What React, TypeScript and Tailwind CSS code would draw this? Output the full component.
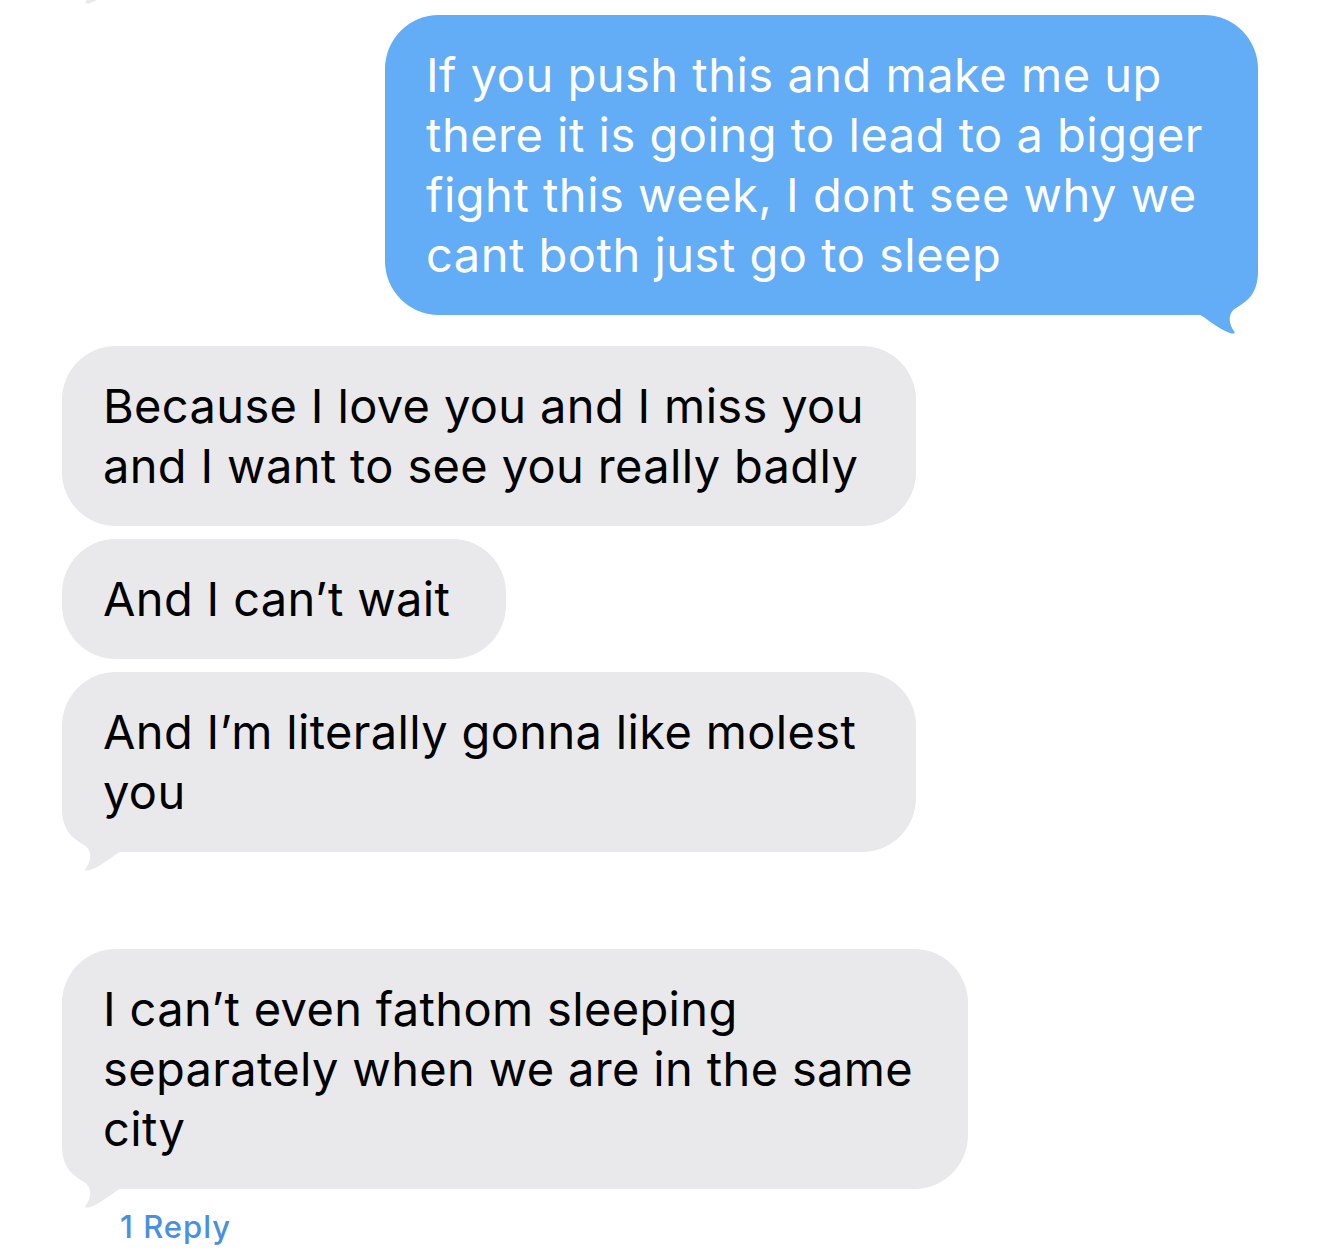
const TAIL = 'M0 0 L80 0 L80 18 C80 40 70 48 58 55 C50 60 50 70 56 78 C58 81 55 81 52 80 C40 76 30 66 19 60 L0 60 Z'

const Tail = ({ side, color }: { side: 'left' | 'right'; color: string }) => (
  <svg
    width="80"
    height="82"
    viewBox="0 0 80 82"
    className={
      side === 'right'
        ? 'absolute right-0 bottom-[-20px]'
        : 'absolute left-0 bottom-[-20px] -scale-x-100'
    }
  >
    <path d={TAIL} fill={color} />
  </svg>
)

const Bubble = ({
  children,
  width,
  tail,
}: {
  children: React.ReactNode
  width: string
  tail?: boolean
}) => (
  <div className={`relative ${width}`}>
    {tail && <Tail side="left" color="#e9e9eb" />}
    <div className="relative rounded-[54px] bg-[#e9e9eb] pl-[41px] pr-[24px] py-[30px] text-black">
      {children}
    </div>
  </div>
)

const App = () => {
  return (
    <div
      className="relative w-[1320px] h-[1249px] overflow-hidden bg-white px-[62px] pt-[15px] text-[47px] leading-[60px] tracking-[0.35px]"
      style={{ fontFamily: 'Inter, "Noto Sans", sans-serif' }}
    >
      {/* leftover tail of the previous message */}
      <svg width="80" height="82" viewBox="0 0 80 82" className="absolute left-[62px] top-[-77px] -scale-x-100">
        <path d={TAIL} fill="#e9e9eb" />
      </svg>

      <div className="flex flex-col">
        <div className="flex justify-end">
          <div className="relative w-[873px]">
            <Tail side="right" color="#62adf5" />
            <div className="relative rounded-[54px] bg-[#62adf5] pl-[41px] pr-[24px] py-[30px] text-white tracking-[0.5px]">
              If you push this and make me up
              <br />
              there it is going to lead to a bigger
              <br />
              fight this week, I dont see why we
              <br />
              cant both just go to sleep
            </div>
          </div>
        </div>

        <div className="mt-[31px] flex flex-col gap-[13px]">
          <Bubble width="w-[854px]">
            Because I love you and I miss you
            <br />
            and I want to see you really badly
          </Bubble>
          <Bubble width="w-[444px]">And I can’t wait</Bubble>
          <Bubble width="w-[854px]" tail>
            And I’m literally gonna like molest
            <br />
            you
          </Bubble>
        </div>

        <div className="mt-[97px]">
          <Bubble width="w-[906px]" tail>
            I can’t even fathom sleeping
            <br />
            separately when we are in the same
            <br />
            city
          </Bubble>
        </div>

        <div className="mt-[18px] pl-[58px] text-[31px] leading-[40px] font-medium tracking-[1px] text-[#4a8fe2]">
          1 Reply
        </div>
      </div>
    </div>
  )
}

export default App
